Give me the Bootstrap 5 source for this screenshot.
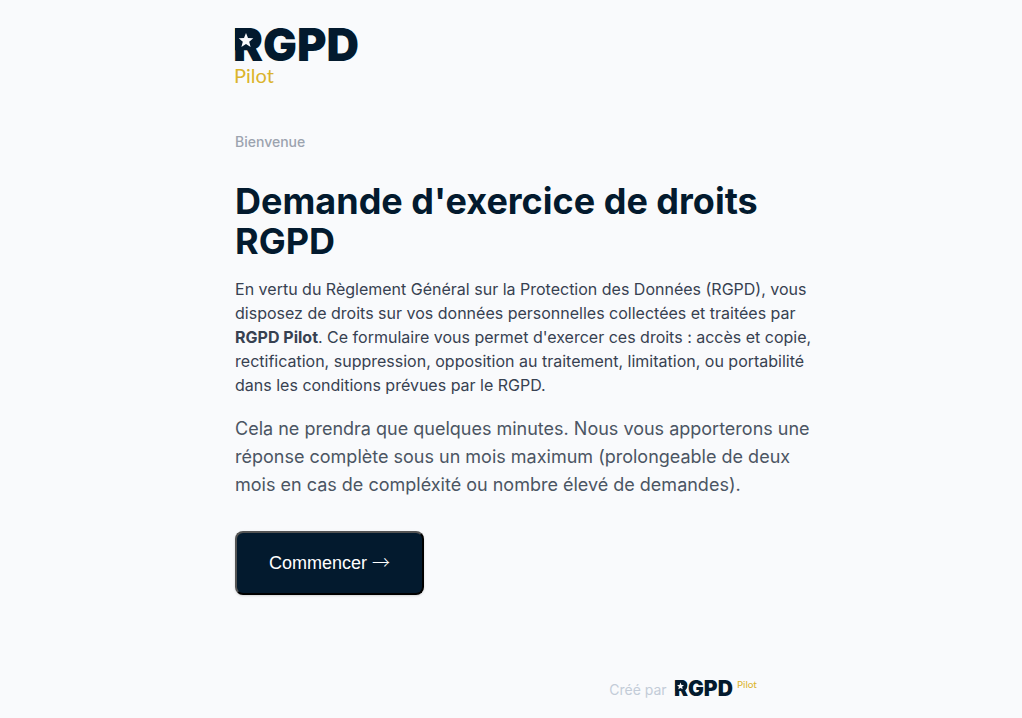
<!DOCTYPE html>
<html lang="fr">
<head>
<meta charset="utf-8">
<meta name="viewport" content="width=device-width, initial-scale=1">
<title>Demande d'exercice de droits RGPD</title>
<link href="https://cdn.jsdelivr.net/npm/bootstrap@5.3.0/dist/css/bootstrap.min.css" rel="stylesheet">
<style>
:root { --navy: #031a2e; --gold: #dbb42c; --paper: #f9fafc; }
body { background: var(--paper); font-family: Inter, "Liberation Sans", sans-serif; color: #374151; line-height: 24px; }
.page { width: 100%; max-width: 1400px; padding-left: 23%; padding-right: 20%; padding-top: 24px; }
.brand-logo { display: block; overflow: visible; }
.brand-name { font-family: Inter, sans-serif; font-weight: 900; fill: var(--navy); }
.brand-sub { font-family: Lato, sans-serif; font-weight: 400; fill: var(--gold); }
.bowl { fill: var(--navy); }
.cut { fill: var(--paper); }
.step { font-size: 14px; line-height: 20px; font-weight: 500; color: #9ca3af; margin: 44px 0 29px; }
.title { font-size: 36px; line-height: 40px; font-weight: 700; color: var(--navy); margin-bottom: 16px; }
.note { font-size: 18px; line-height: 28px; color: #4b5563; margin: 18px 0 32px; }
.start { font-family: "Liberation Sans", Arial, sans-serif; font-size: 18px; line-height: 28px; padding: 16px 32px; color: #fff; background: var(--navy); border: 2px outset #000; border-radius: 8px; box-shadow: 0 1px 3px rgba(0,0,0,.1), 0 1px 2px rgba(0,0,0,.06); }
.start:hover { background: #0b2d4a; }
.arrow { font-family: "Noto Sans CJK JP", sans-serif; font-weight: 300; line-height: 1; }
.credit { margin-top: 81px; padding-right: 60px; font-size: 14px; line-height: 28px; color: #c3ccd8; }
@media (max-width: 767px) {
  .page { padding-left: 24px; padding-right: 24px; }
  .credit { padding-right: 0; }
}
</style>
</head>
<body>
<div class="page">
  <header>
    <svg class="brand-logo" width="128" height="64" viewBox="0 0 128 64" role="img" aria-label="RGPD Pilot">
      <text class="brand-name" x="-2" y="37" font-size="45">RGPD</text>
      <path class="bowl" d="M0 4.300h14q10 1 10 11t-8 11H0z"/>
      <path class="cut" d="M11 9l2 5 5.300.3-4.100 3.400 1.400 5.300-4.600-2.900-4.600 2.900 1.400-5.300-4.100-3.400 5.300-.3z"/>
      <text class="brand-sub" x="-1" y="59" font-size="20">Pilot</text>
    </svg>
  </header>
  <main>
    <p class="step">Bienvenue</p>
    <h1 class="title">Demande d'exercice de droits RGPD</h1>
    <p class="mb-0">En vertu du Règlement Général sur la Protection des Données (RGPD), vous disposez de droits sur vos données personnelles collectées et traitées par <strong>RGPD Pilot</strong>. Ce formulaire vous permet d'exercer ces droits : accès et copie, rectification, suppression, opposition au traitement, limitation, ou portabilité dans les conditions prévues par le RGPD.</p>
    <p class="note">Cela ne prendra que quelques minutes. Nous vous apporterons une réponse complète sous un mois maximum (prolongeable de deux mois en cas de compléxité ou nombre élevé de demandes).</p>
    <button type="button" class="start">Commencer <span class="arrow">→</span></button>
  </main>
  <footer class="credit d-flex justify-content-end align-items-center gap-2">
    <span>Créé par</span>
    <svg class="brand-logo" width="83" height="24" viewBox="0 0 83 24" role="img" aria-label="RGPD Pilot">
      <text class="brand-name" x="-1" y="18" font-size="21">RGPD</text>
      <path class="bowl" d="M0.500 3h7q4.500.5 4.500 5t-4 5H.5z"/>
      <path class="cut" d="M5.500 4.500l1 2.400 2.500.2-1.900 1.700.6 2.500-2.200-1.400-2.200 1.400.6-2.500L2 7.100l2.500-.2z"/>
      <text class="brand-sub" x="62" y="10" font-size="10">Pilot</text>
    </svg>
  </footer>
</div>
<script src="https://cdn.jsdelivr.net/npm/bootstrap@5.3.0/dist/js/bootstrap.bundle.min.js"></script>
</body>
</html>
